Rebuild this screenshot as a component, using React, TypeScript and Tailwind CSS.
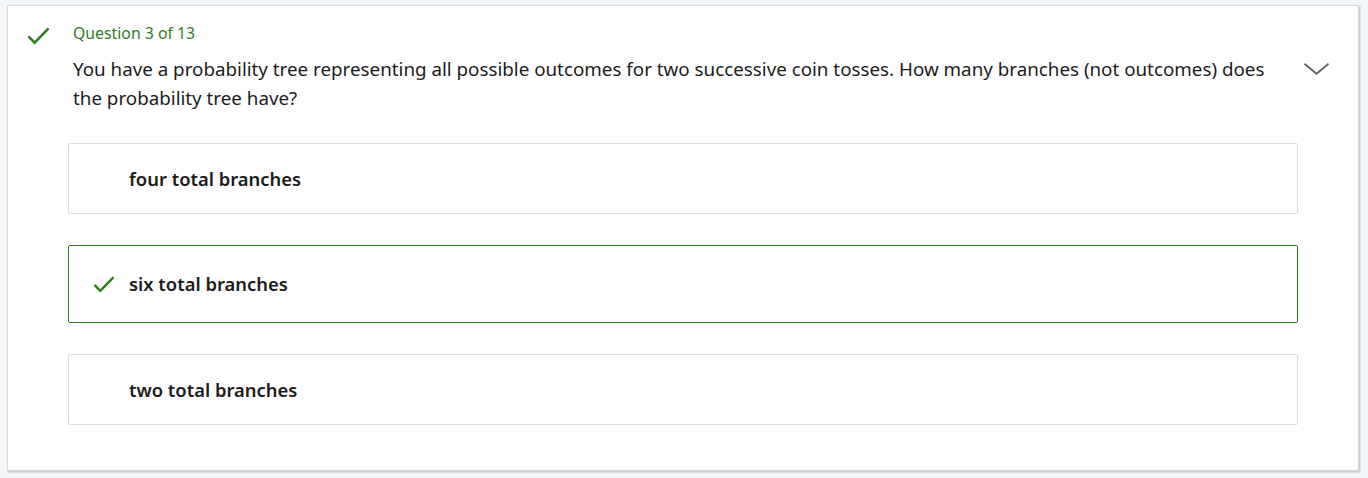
const Check = ({ className }: { className?: string }) => (
  <svg viewBox="0 0 24 20" className={className} fill="none">
    <path d="M1.5 10.5 L8 17 L22.5 2" stroke="#2f7d1f" strokeWidth="2.6" />
  </svg>
);

const options = [
  { label: "four total branches", correct: false },
  { label: "six total branches", correct: true },
  { label: "two total branches", correct: false },
];

export default function App() {
  return (
    <div
      className="w-[1368px] h-[478px] bg-[#f3f6f9] pt-[5px] pl-[7px]"
      style={{ fontFamily: '"Noto Sans", "Open Sans", sans-serif' }}
    >
      <div className="w-[1352px] h-[466px] bg-white border border-[#d6d6d6] shadow-[1px_1px_2px_rgba(0,0,0,0.25)] flex">
        {/* status icon */}
        <div className="w-[65px] shrink-0 pt-[20px] pl-[19px]">
          <Check className="w-[23px] h-[20px]" />
        </div>

        <div className="flex-1 pt-[17px]">
          <div className="flex">
            <div className="flex-1">
              <p className="text-[15.8px] leading-[20px] text-[#2f7d1f]">
                Question 3 of 13
              </p>
              <p className="mt-[12px] text-[18.8px] leading-[29px] text-[#1b1b1b]">
                You have a probability tree representing all possible outcomes
                for two successive coin tosses. How many branches (not outcomes)
                does the probability tree have?
              </p>
            </div>
            <div className="w-[80px] shrink-0 pt-[39px] pl-[25px]">
              <svg viewBox="0 0 28 14" className="w-[27px] h-[14px]" fill="none">
                <path d="M1.5 1.5 L14 12 L26.5 1.5" stroke="#666666" strokeWidth="2" />
              </svg>
            </div>
          </div>

          <div className="mt-[30px] mr-[60px] ml-[-5px] flex flex-col gap-[31px]">
            {options.map((o) =>
              o.correct ? (
                <div
                  key={o.label}
                  className="h-[78px] border border-[#2f7d1f] rounded-[2px] flex items-center"
                >
                  <div className="w-[60px] pl-[24px]">
                    <Check className="w-[22px] h-[19px]" />
                  </div>
                  <span className="text-[18.4px] font-semibold text-[#1b1b1b]">
                    {o.label}
                  </span>
                </div>
              ) : (
                <div
                  key={o.label}
                  className="h-[71px] border border-[#dcdcdc] rounded-[2px] flex items-center pl-[60px]"
                >
                  <span className="text-[18.4px] font-semibold text-[#1b1b1b]">
                    {o.label}
                  </span>
                </div>
              )
            )}
          </div>
        </div>
      </div>
    </div>
  );
}
